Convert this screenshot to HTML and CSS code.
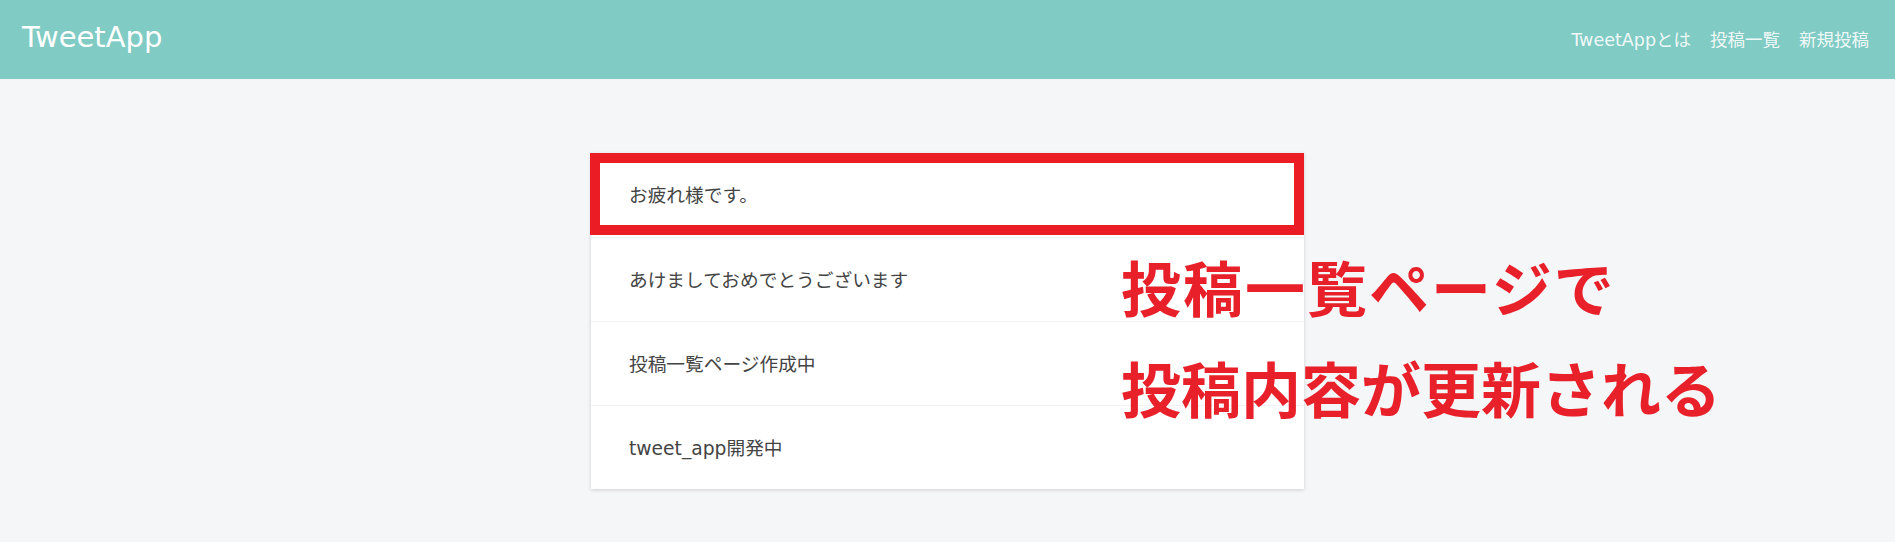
FILE: index.html
```html
<!DOCTYPE html>
<html lang="ja">
<head>
<meta charset="utf-8">
<title>TweetApp</title>
<link rel="stylesheet" href="styles.css">
</head>
<body>
<header class="header">
  <div class="logo">TweetApp</div>
  <nav class="nav">
    <a class="nav-link" href="#">TweetAppとは</a>
    <a class="nav-link" href="#">投稿一覧</a>
    <a class="nav-link" href="#">新規投稿</a>
  </nav>
</header>
<main class="main">
  <div class="posts">
    <div class="post post-highlight">お疲れ様です。</div>
    <div class="post">あけましておめでとうございます</div>
    <div class="post">投稿一覧ページ作成中</div>
    <div class="post">tweet_app開発中</div>
  </div>
  <div class="annotation">
    <div class="annotation-line line-one">投稿一覧ページで</div>
    <div class="annotation-line">投稿内容が更新される</div>
  </div>
</main>
</body>
</html>
```

FILE: styles.css
```css
* { box-sizing: border-box; }
html, body { margin: 0; padding: 0; }
body {
  background: #f5f6f8;
  font-family: "DejaVu Sans", "Noto Sans CJK JP", sans-serif;
  color: #444444;
  height: 542px;
  overflow: hidden;
}
.header {
  height: 79px;
  background: #80cbc4;
  display: flex;
  align-items: center;
  justify-content: space-between;
  padding: 0 26px 0 22px;
}
.logo {
  color: #ffffff;
  font-size: 29px;
  line-height: 1;
  margin-top: -4px;
}
.nav {
  display: flex;
  gap: 19px;
  margin-top: -2px;
}
.nav-link {
  color: rgba(255,255,255,0.9);
  text-decoration: none;
  font-size: 17.5px;
}
.main {
  position: relative;
  padding-top: 74px;
  display: flex;
  justify-content: center;
}
.posts {
  width: 713px;
  background: #ffffff;
  box-shadow: 0 1px 4px rgba(0,0,0,0.16);
  display: flex;
  flex-direction: column;
}
.post {
  height: 84px;
  display: flex;
  align-items: center;
  padding: 0 0 3px 38px;
  font-size: 18.7px;
  border-top: 1px solid #f2f2f2;
}
.post:first-child { border-top: none; }
.post-highlight { position: relative; }
.post-highlight::after {
  content: "";
  position: absolute;
  left: -1px;
  right: 0;
  top: 0;
  bottom: 2px;
  border: 10px solid #ec1c24;
}
.annotation {
  position: absolute;
  left: 1121px;
  top: 156px;
  color: #e8202a;
  font-family: "Noto Sans CJK JP", sans-serif;
  font-weight: 700;
  font-size: 60px;
  line-height: 101px;
  white-space: nowrap;
}
.line-one { letter-spacing: 2px; }
```
